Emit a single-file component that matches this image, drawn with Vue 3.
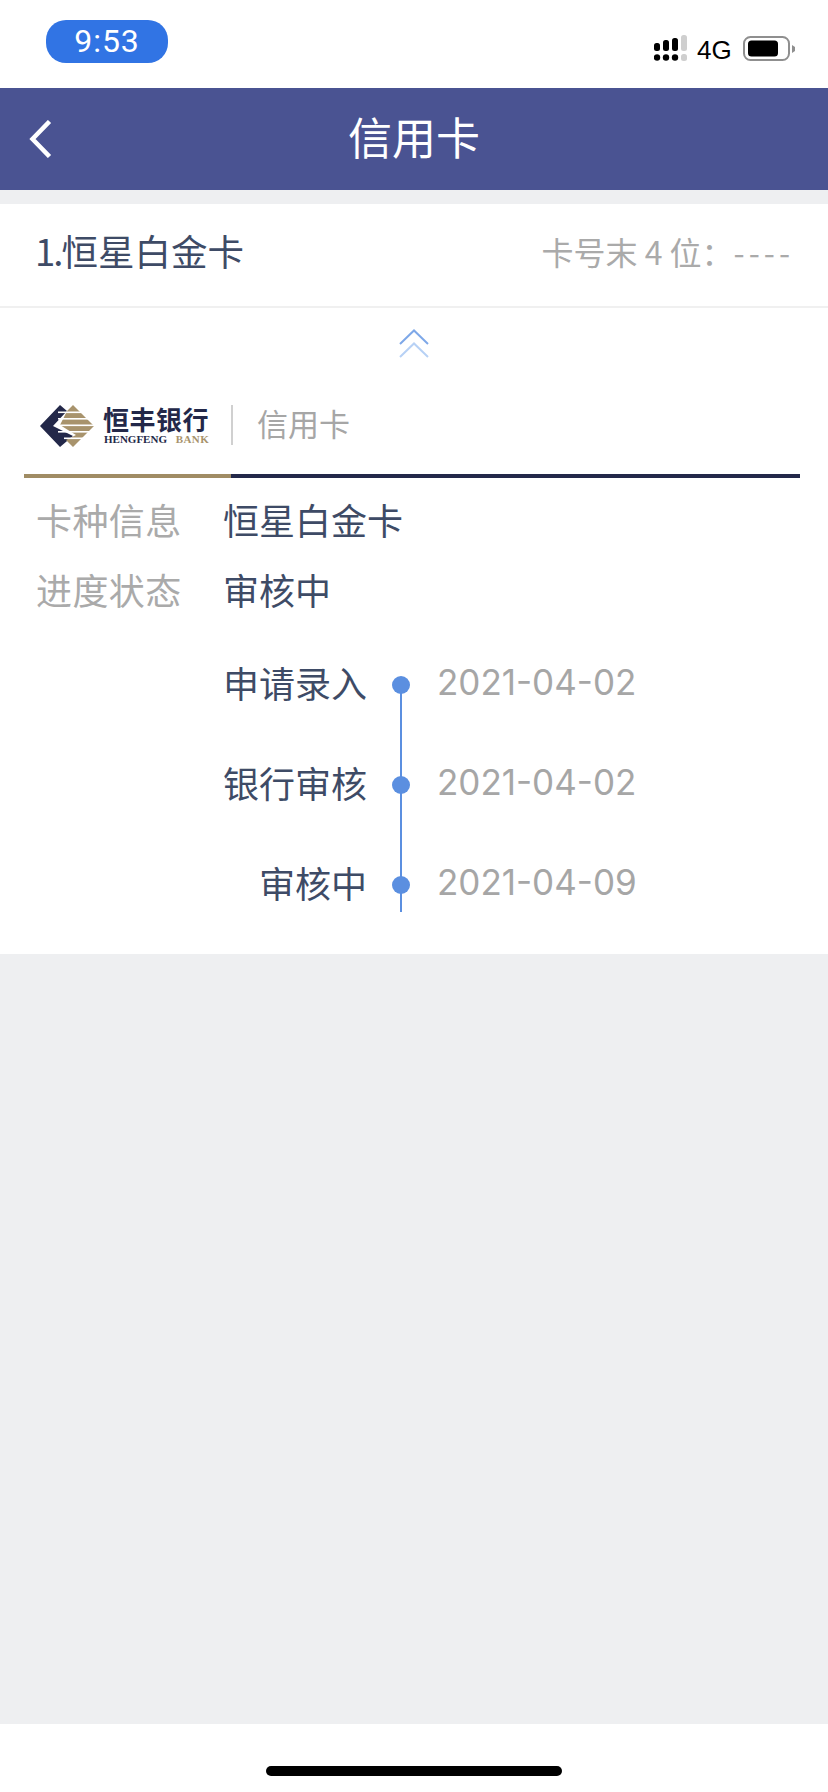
<script setup>
const info = [
  { label: '卡种信息', value: '恒星白金卡' },
  { label: '进度状态', value: '审核中' },
]
const steps = [
  { name: '申请录入', date: '2021-04-02' },
  { name: '银行审核', date: '2021-04-02' },
  { name: '审核中', date: '2021-04-09' },
]
</script>

<template>
  <div class="page">
    <header class="status">
      <div class="time">9:53</div>
      <div class="status-right">
        <svg class="signal" width="34" height="27" viewBox="0 0 34 27">
          <g fill="#000">
            <rect x="0" y="8" width="6" height="8" rx="2.5" />
            <rect x="9" y="5" width="6" height="11" rx="2.5" />
            <rect x="18" y="3" width="6" height="13" rx="2.5" />
            <circle cx="3" cy="22.5" r="3.2" />
            <circle cx="12" cy="22.5" r="3.2" />
            <circle cx="21" cy="22.5" r="3.2" />
          </g>
          <g fill="#cfcfcf">
            <rect x="27" y="0" width="6" height="16" rx="2.5" />
            <rect x="27" y="19" width="6" height="7" rx="2.5" />
          </g>
        </svg>
        <span class="net">4G</span>
        <svg class="battery" width="53" height="26" viewBox="0 0 53 26">
          <rect x="1" y="1" width="45" height="23" rx="6.5" fill="#fff" stroke="#8f8f8f" stroke-width="2" />
          <rect x="5" y="4.5" width="30" height="16" rx="3.5" fill="#000" />
          <path d="M49 9 L52 11 V15 L49 17 Z" fill="#8f8f8f" />
        </svg>
      </div>
    </header>

    <nav class="nav">
      <svg class="back" width="26" height="38" viewBox="0 0 26 38">
        <path d="M22.5 1.5 L5.5 19 L22.5 36.5" fill="none" stroke="#fff" stroke-width="4.5" />
      </svg>
      <h1 class="title">信用卡</h1>
      <span></span>
    </nav>

    <main class="main">
      <section class="card">
        <div class="card-head">
          <span class="card-name"><span class="card-index">1.</span>恒星白金卡</span>
          <span class="card-no">卡号末 4 位：<span class="dashes">----</span></span>
        </div>

        <div class="collapse">
          <svg width="30" height="29" viewBox="0 0 30 29">
            <path d="M1 15 L15 1.5 L29 15" fill="none" stroke="#7ea8e8" stroke-width="2" />
            <path d="M1 28 L15 14.5 L29 28" fill="none" stroke="#b7d1f5" stroke-width="2" />
          </svg>
        </div>

        <div class="brand">
          <svg class="mark" width="54" height="42" viewBox="0 0 54 42">
            <path d="M20 0 L27 6 L13 21 L33 31 L20 42 L0 21 Z" fill="#232849" />
            <path d="M33 0 L54 21 L33 42 L26 35 L36 30 L20 20 L27 6 Z" fill="#a8936c" />
            <g fill="#fff">
              <rect x="18" y="6.5" width="36" height="1.6" />
              <rect x="18" y="13" width="36" height="1.6" />
              <rect x="18" y="19.5" width="36" height="1.6" />
              <rect x="18" y="26" width="36" height="1.6" />
              <rect x="24" y="32.5" width="30" height="1.6" />
            </g>
          </svg>
          <div class="bank">
            <div class="bank-cn">恒丰银行</div>
            <div class="bank-en">HENGFENG <span class="bank-en-tan">BANK</span></div>
          </div>
          <i class="brand-sep"></i>
          <span class="brand-type">信用卡</span>
        </div>

        <div class="stripe"><i class="stripe-tan"></i><i class="stripe-navy"></i></div>

        <div class="info">
          <div v-for="row in info" :key="row.label" class="info-row">
            <span class="info-label">{{ row.label }}</span>
            <span class="info-value">{{ row.value }}</span>
          </div>
        </div>

        <ol class="timeline">
          <li v-for="step in steps" :key="step.name" class="step">
            <span class="step-name">{{ step.name }}</span>
            <span class="step-node"><i class="dot"></i></span>
            <span class="step-date">{{ step.date }}</span>
          </li>
        </ol>
      </section>
    </main>

    <footer class="home"><i class="home-bar"></i></footer>
  </div>
</template>

<style>
html, body { margin: 0; background: #fff; }
</style>

<style scoped>
.page {
  width: 828px;
  height: 1792px;
  display: flex;
  flex-direction: column;
  background: #eeeff1;
  font-family: "Noto Sans CJK SC", "Noto Sans", sans-serif;
  overflow: hidden;
}
.status {
  height: 88px;
  flex: none;
  background: #fff;
  display: flex;
  justify-content: space-between;
  align-items: flex-start;
  box-sizing: border-box;
  padding: 20px 32px 0 46px;
}
.time {
  width: 122px;
  height: 43px;
  border-radius: 20px;
  background: #3174e4;
  color: #fff;
  font: 400 32px/43px Roboto, sans-serif;
  letter-spacing: 1px;
  text-align: center;
}
.status-right {
  margin-top: 15px;
  display: flex;
  align-items: flex-start;
}
.signal { display: block; margin-right: 9px; }
.net {
  font: 400 26px/27px "Liberation Sans", sans-serif;
  color: #000;
  margin-top: 2px;
  width: 46px;
}
.battery { display: block; margin-top: 1px; }
.nav {
  height: 102px;
  flex: none;
  background: #4a5392;
  display: grid;
  grid-template-columns: 1fr auto 1fr;
  align-items: center;
  padding-left: 27px;
  padding-right: 27px;
  box-sizing: border-box;
}
.back { display: block; }
.title {
  margin: 0 0 6px;
  color: #fff;
  font-size: 44px;
  font-weight: 400;
  line-height: 60px;
}
.main { flex: 1; padding-top: 14px; }
.card { background: #fff; height: 750px; }
.card-head {
  height: 102px;
  border-bottom: 2px solid #f0f0f0;
  display: flex;
  justify-content: space-between;
  align-items: flex-start;
  padding: 0 34px 0 35px;
}
.card-name { font-size: 36.5px; line-height: 94px; color: #3e4b66; }
.card-index { letter-spacing: -2px; }
.card-no { font-size: 32px; line-height: 94px; color: #aaa; white-space: nowrap; }
.dashes { letter-spacing: 4px; }
.collapse {
  display: flex;
  justify-content: center;
  padding-top: 21px;
}
.collapse svg { display: block; }
.brand {
  display: flex;
  align-items: flex-start;
  margin-top: 47px;
  padding-left: 40px;
  height: 42px;
}
.mark { display: block; flex: none; }
.bank { margin-left: 9px; width: 108px; }
.bank-cn {
  font: 700 26px/28px "Noto Sans CJK SC", sans-serif;
  letter-spacing: 0.5px;
  color: #232849;
}
.bank-en {
  font: 700 11px/12px "Liberation Serif", serif;
  color: #232849;
  white-space: nowrap;
  padding-left: 1px;
}
.bank-en-tan { color: #a8936c; margin-left: 6px; letter-spacing: 0.4px; }
.brand-sep {
  width: 2px;
  height: 40px;
  background: #d0d0d0;
  margin-left: 20px;
  flex: none;
}
.brand-type { font-size: 31px; line-height: 36px; color: #a6a6a6; margin-left: 24px; }
.stripe {
  display: flex;
  height: 4px;
  margin: 27px 28px 0 24px;
}
.stripe-tan { width: 207px; background: #a08c64; }
.stripe-navy { flex: 1; background: #232849; }
.info { padding: 0 36px; margin-top: 6px; }
.info-row {
  display: flex;
  height: 70px;
  font-size: 36px;
  line-height: 70px;
}
.info-label { width: 188px; color: #aaa; letter-spacing: 0.4px; }
.info-value { color: #3e4b66; margin-left: -1px; }
.timeline { list-style: none; margin: 11px 0 0; padding: 0; }
.step {
  display: grid;
  grid-template-columns: 367px 69px auto;
  height: 100px;
  font-size: 36px;
  line-height: 94px;
}
.step-name { text-align: right; color: #3e4b66; }
.step-node { position: relative; height: 100%; }
.step-node::after {
  content: "";
  position: absolute;
  left: 33px;
  top: 50%;
  width: 2px;
  height: 100px;
  background: #5b8fe0;
}
.step:last-child .step-node::after { height: 27px; }
.dot {
  position: absolute;
  left: 25px;
  top: 41px;
  width: 18px;
  height: 18px;
  border-radius: 50%;
  background: #5b8fe0;
  z-index: 1;
}
.step-date {
  font-family: Inter, "Noto Sans", sans-serif;
  font-size: 35px;
  color: #a6a6a6;
  margin-left: 1px;
}
.home {
  height: 68px;
  flex: none;
  background: #fff;
  display: flex;
  justify-content: center;
  padding-top: 42px;
  box-sizing: border-box;
}
.home-bar {
  width: 296px;
  height: 10px;
  border-radius: 5px;
  background: #000;
}
</style>
